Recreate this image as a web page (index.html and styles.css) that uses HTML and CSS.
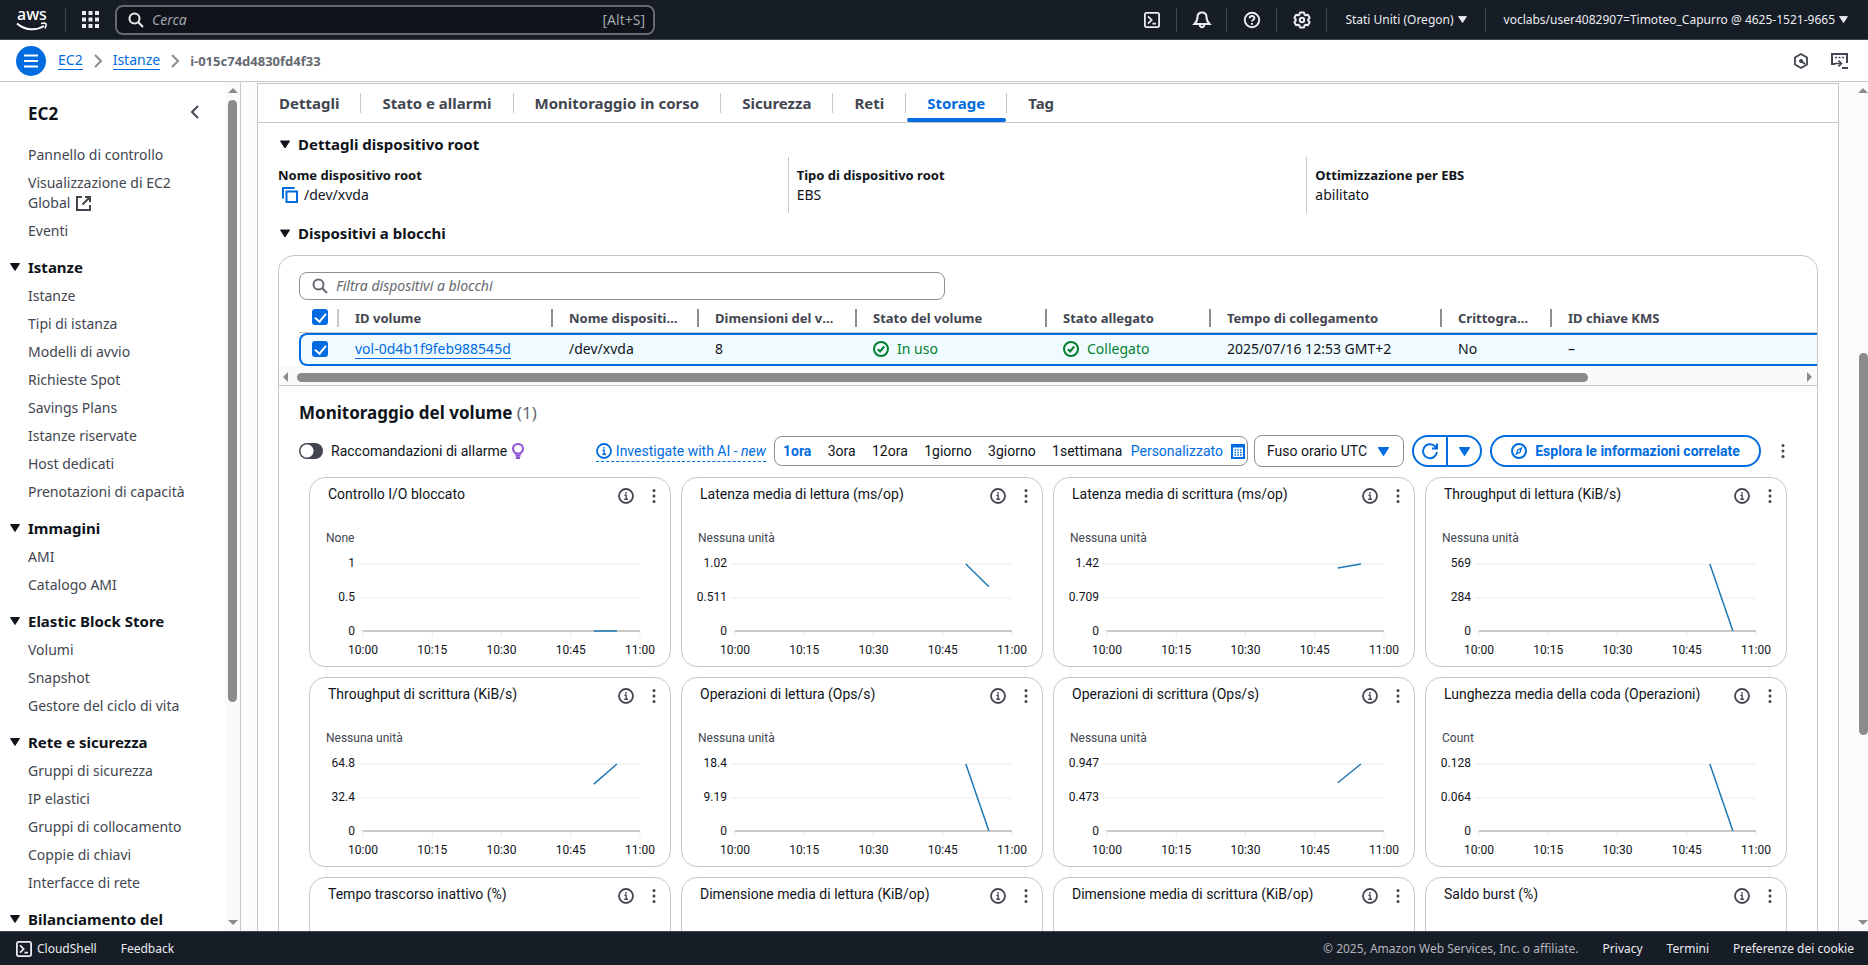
FILE: index.html
```
<!DOCTYPE html>
<html lang="it">
<head>
  <meta charset="UTF-8" />
  <meta name="viewport" content="width=device-width, initial-scale=1.0" />
  <title>Dettagli istanza | EC2</title>
  <link rel="stylesheet" href="styles.css">
</head>
<body>
  <!-- icone condivise -->
  <svg class="sprite" aria-hidden="true">
    <symbol id="i-search" viewBox="0 0 16 16"><circle cx="6.5" cy="6.5" r="5"/><path d="M10.3 10.3L15 15"/></symbol>
    <symbol id="i-shell" viewBox="0 0 18 18"><rect x="1" y="1" width="16" height="16" rx="2"/><path d="M4.5 4.8L8.6 9l-4.1 4.2M9.5 13h4"/></symbol>
    <symbol id="i-info" viewBox="0 0 16 16"><circle cx="8" cy="8" r="7" stroke-width="1.8"/><path stroke-width="1.4" d="M6.500 7.200H8.200V11.300M6.300 11.300h3.800M8 4v1.700"/></symbol>
    <symbol id="i-dots" viewBox="0 0 4 16"><g fill="currentColor" stroke="none"><circle cx="2" cy="2.5" r="1.5"/><circle cx="2" cy="8" r="1.5"/><circle cx="2" cy="13.5" r="1.5"/></g></symbol>
    <symbol id="i-down" viewBox="0 0 10 8"><path fill="currentColor" stroke-width="1" stroke-linejoin="round" d="M.5.5h9L5 7.5z"/></symbol>
    <symbol id="i-right" viewBox="0 0 8 14"><path d="M1 1l6 6-6 6"/></symbol>
    <symbol id="i-ok" viewBox="0 0 16 16"><circle cx="8" cy="8" r="7"/><path d="M4.8 8.2l2.3 2.3 4.1-5"/></symbol>
  </svg>

  <header class="topbar">
    <a class="aws" href="#" aria-label="AWS">
      <span>aws</span>
      <svg width="32" height="10" viewBox="0 0 32 10"><path d="M1 1.500C9 8.500 20 9 28 4" stroke-width="2"/><path d="M25 1.500c5-1 6.500-.5 4 5" stroke-width="1.600"/></svg>
    </a>
    <button class="apps" aria-label="Servizi">
      <svg width="17" height="17" viewBox="0 0 17 17"><path fill="currentColor" stroke="none" d="M0 0h4v4H0zM6.500 0h4v4h-4zM13 0h4v4h-4zM0 6.500h4v4H0zM6.500 6.500h4v4h-4zM13 6.500h4v4h-4zM0 13h4v4H0zM6.500 13h4v4h-4zM13 13h4v4h-4z"/></svg>
    </button>
    <label class="top-search">
      <svg width="16" height="16"><use href="#i-search"/></svg>
      <input type="search" placeholder="Cerca" aria-label="Cerca" />
      <kbd>[Alt+S]</kbd>
    </label>
    <nav class="top-nav">
      <button class="icon-cell" aria-label="CloudShell"><svg width="16" height="16"><use href="#i-shell"/></svg></button>
      <button class="icon-cell" aria-label="Notifiche"><svg width="18" height="18" viewBox="0 0 18 18"><path d="M9 1.500c-3 0-4.500 2-4.500 4.500 0 4-1.500 5.500-3 7h15c-1.500-1.500-3-3-3-7C13.500 3.500 12 1.500 9 1.500zM6.800 13.500c0 3.600 4.400 3.600 4.400 0"/></svg></button>
      <button class="icon-cell" aria-label="Aiuto"><svg width="18" height="18" viewBox="0 0 18 18"><circle cx="9" cy="9" r="7.200"/><path d="M6.700 7.200c0-3 4.700-3 4.700-.2 0 1.700-2.400 1.700-2.400 3.600M9 12v1.800"/></svg></button>
      <button class="icon-cell" aria-label="Impostazioni"><svg width="18" height="18" viewBox="0 0 18 18"><path stroke-linejoin="round" d="M7 1.500h4l.6 2.200 1 .6 2.300-.5 1.700 3-1.400 1.700v1l1.400 1.700-1.700 3-2.300-.5-1 .6-.6 2.200H7l-.6-2.200-1-.6-2.300.5-1.700-3 1.400-1.700v-1L1.400 6.800l1.700-3 2.300.5 1-.6z"/><circle cx="9" cy="9" r="2.200"/></svg></button>
      <button class="text-cell">Stati Uniti (Oregon) <svg width="9" height="7"><use href="#i-down"/></svg></button>
      <button class="text-cell">voclabs/user4082907=Timoteo_Capurro @ 4625-1521-9665 <svg width="9" height="7"><use href="#i-down"/></svg></button>
    </nav>
  </header>

  <div class="crumbbar">
    <button class="menu-btn" aria-label="Menu"><svg width="16" height="14" viewBox="0 0 16 14"><path d="M1 1.500h14M1 7h14M1 12.500h14"/></svg></button>
    <nav class="crumbs">
      <a href="#">EC2</a>
      <svg width="8" height="14"><use href="#i-right"/></svg>
      <a href="#">Istanze</a>
      <svg width="8" height="14"><use href="#i-right"/></svg>
      <b>i-015c74d4830fd4f33</b>
    </nav>
    <div class="crumb-tools">
      <button aria-label="Amazon Q"><svg width="16" height="16" viewBox="0 0 16 16"><path stroke-width="1.800" d="M8 1l6 3.500v7L8 15l-6-3.500v-7z"/><path stroke-width="1.800" d="M8 8l4 3"/><circle cx="8" cy="8" r="1.500" fill="currentColor" stroke-width="1"/></svg></button>
      <button aria-label="Pannello"><svg width="17" height="16" viewBox="0 0 17 16"><path d="M4 11H1V1h15v9M11 15h6"/><path stroke-width="1.600" d="M4 4.500h2M7.500 4.500h2M11 4.500h2M4 10.500h6M7.500 7.500l3 3-3 3"/></svg></button>
    </div>
  </div>

  <div class="layout">
    <aside class="sidebar">
      <div class="side-body">
        <div class="side-head"><h2>EC2</h2><button aria-label="Chiudi"><svg width="8" height="14" viewBox="0 0 8 14"><path d="M7 1L1 7l6 6"/></svg></button></div>
        <ul class="side-list">
          <li><a href="#">Pannello di controllo</a></li>
          <li><a href="#">Visualizzazione di EC2 Global <svg width="15" height="15" viewBox="0 0 15 15"><path d="M6 1H1v13h13V9M9 1h5v5M14 1L6.500 8.500"/></svg></a></li>
          <li><a href="#">Eventi</a></li>
          <li class="group"><svg width="10" height="8"><use href="#i-down"/></svg>Istanze</li>
          <li><a href="#">Istanze</a></li>
          <li><a href="#">Tipi di istanza</a></li>
          <li><a href="#">Modelli di avvio</a></li>
          <li><a href="#">Richieste Spot</a></li>
          <li><a href="#">Savings Plans</a></li>
          <li><a href="#">Istanze riservate</a></li>
          <li><a href="#">Host dedicati</a></li>
          <li><a href="#">Prenotazioni di capacità</a></li>
          <li class="group"><svg width="10" height="8"><use href="#i-down"/></svg>Immagini</li>
          <li><a href="#">AMI</a></li>
          <li><a href="#">Catalogo AMI</a></li>
          <li class="group"><svg width="10" height="8"><use href="#i-down"/></svg>Elastic Block Store</li>
          <li><a href="#">Volumi</a></li>
          <li><a href="#">Snapshot</a></li>
          <li><a href="#">Gestore del ciclo di vita</a></li>
          <li class="group"><svg width="10" height="8"><use href="#i-down"/></svg>Rete e sicurezza</li>
          <li><a href="#">Gruppi di sicurezza</a></li>
          <li><a href="#">IP elastici</a></li>
          <li><a href="#">Gruppi di collocamento</a></li>
          <li><a href="#">Coppie di chiavi</a></li>
          <li><a href="#">Interfacce di rete</a></li>
          <li class="group"><svg width="10" height="8"><use href="#i-down"/></svg>Bilanciamento del</li>
        </ul>
      </div>
      <div class="vscroll"><i class="up"></i><div class="track"><div class="thumb side-thumb"></div></div><i class="dn"></i></div>
    </aside>

    <main class="content">
      <div class="panel">
        <nav class="tabs">
          <a href="#">Dettagli</a>
          <a href="#">Stato e allarmi</a>
          <a href="#">Monitoraggio in corso</a>
          <a href="#">Sicurezza</a>
          <a href="#">Reti</a>
          <a href="#" class="active">Storage</a>
          <a href="#">Tag</a>
        </nav>

        <div class="panel-body">
          <h3 class="section-title"><svg width="10" height="9"><use href="#i-down"/></svg>Dettagli dispositivo root</h3>
          <dl class="facts">
            <div><dt>Nome dispositivo root</dt><dd><svg class="copy" width="16" height="16" viewBox="0 0 16 16"><path d="M1 11.500V1h11.500M4.500 4.500H15V15H4.500z"/></svg>/dev/xvda</dd></div>
            <div><dt>Tipo di dispositivo root</dt><dd>EBS</dd></div>
            <div><dt>Ottimizzazione per EBS</dt><dd>abilitato</dd></div>
          </dl>
          <h3 class="section-title"><svg width="10" height="9"><use href="#i-down"/></svg>Dispositivi a blocchi</h3>

          <section class="card">
            <label class="filter">
              <svg width="16" height="16"><use href="#i-search"/></svg>
              <input type="search" placeholder="Filtra dispositivi a blocchi" aria-label="Filtra dispositivi a blocchi" />
            </label>
            <table class="blocks">
              <colgroup><col class="c-check"><col class="c-id"><col class="c-name"><col class="c-size"><col class="c-state"><col class="c-att"><col class="c-time"><col class="c-enc"><col></colgroup>
              <thead>
                <tr>
                  <th><input type="checkbox" checked aria-label="Seleziona tutto"></th>
                  <th>ID volume</th>
                  <th>Nome dispositivo</th>
                  <th>Dimensioni del volume</th>
                  <th>Stato del volume</th>
                  <th>Stato allegato</th>
                  <th>Tempo di collegamento</th>
                  <th>Crittografato</th>
                  <th>ID chiave KMS</th>
                </tr>
              </thead>
              <tbody>
                <tr>
                  <td><input type="checkbox" checked aria-label="Seleziona vol-0d4b1f9feb988545d"></td>
                  <td><a href="#">vol-0d4b1f9feb988545d</a></td>
                  <td>/dev/xvda</td>
                  <td>8</td>
                  <td class="ok"><svg width="16" height="16"><use href="#i-ok"/></svg>In uso</td>
                  <td class="ok"><svg width="16" height="16"><use href="#i-ok"/></svg>Collegato</td>
                  <td>2025/07/16 12:53 GMT+2</td>
                  <td>No</td>
                  <td>–</td>
                </tr>
              </tbody>
            </table>
            <div class="hscroll"><i class="lf"></i><div class="track"><div class="thumb"></div></div><i class="rt"></i></div>

            <div class="monitor">
              <h2>Monitoraggio del volume <span>(1)</span></h2>
              <div class="tools">
                <label class="toggle"><input type="checkbox" role="switch">Raccomandazioni di allarme
                  <svg class="bulb" width="12" height="16" viewBox="0 0 12 16"><path d="M3.500 10.500C2.500 9 1 8 1 5.700 1 3 3.200 1 6 1s5 2 5 4.700c0 2.300-1.500 3.300-2.500 4.800zM3.500 12.700h5M4 15h4"/></svg>
                </label>
                <a class="investigate" href="#"><svg width="16" height="16"><use href="#i-info"/></svg><span>Investigate with AI - <em>new</em></span></a>
                <div class="range">
                  <button class="on">1ora</button><button>3ora</button><button>12ora</button><button>1giorno</button><button>3giorno</button><button>1settimana</button>
                  <button class="custom">Personalizzato <svg width="14" height="15" viewBox="0 0 14 15"><path d="M1 1h12v13H1zM1 2.500h12"/><path stroke-width="1.500" d="M3.500 6h1.500M6.300 6h1.500M9 6h1.500M3.500 8.500h1.500M6.300 8.500h1.500M9 8.500h1.500M3.500 11h1.500M6.300 11h1.500M9 11h1.500"/></svg></button>
                </div>
                <button class="tz">Fuso orario UTC <svg width="11" height="9"><use href="#i-down"/></svg></button>
                <div class="refresh">
                  <button aria-label="Aggiorna"><svg width="16" height="16" viewBox="0 0 16 16"><path d="M15 9a7 7 0 1 1-2.500-6.200L14.500 5M15 .5V5.500h-5"/></svg></button>
                  <button aria-label="Intervallo di aggiornamento"><svg width="11" height="9"><use href="#i-down"/></svg></button>
                </div>
                <button class="explore"><svg width="16" height="16" viewBox="0 0 16 16"><circle cx="8" cy="8" r="7"/><path stroke-width="1.300" d="M10.500 5L9.200 9 5.500 11l1.300-4z"/></svg>Esplora le informazioni correlate</button>
                <button class="dots" aria-label="Altro"><svg width="4" height="16"><use href="#i-dots"/></svg></button>
              </div>
              <div class="charts" id="charts"></div>
            </div>
          </section>
        </div>
      </div>
    </main>
    <div class="vscroll page-scroll"><i class="up"></i><div class="track"><div class="thumb page-thumb"></div></div><i class="dn"></i></div>
  </div>

  <footer class="footer">
    <a href="#"><svg width="16" height="16"><use href="#i-shell"/></svg>CloudShell</a>
    <a href="#">Feedback</a>
    <span class="copyright">© 2025, Amazon Web Services, Inc. o affiliate.</span>
    <a href="#">Privacy</a>
    <a href="#">Termini</a>
    <a href="#">Preferenze dei cookie</a>
  </footer>

  <script src="charts.js"></script>
</body>
</html>
```

FILE: charts.js
```
// [titolo, unità, etichette asse y, valori 10:50 e 10:55 (0-1)]
const CHARTS = [
  ['Controllo I/O bloccato', 'None', ['1', '0.5', '0'], [0, 0]],
  ['Latenza media di lettura (ms/op)', 'Nessuna unità', ['1.02', '0.511', '0'], [1, 0.66]],
  ['Latenza media di scrittura (ms/op)', 'Nessuna unità', ['1.42', '0.709', '0'], [0.94, 1]],
  ['Throughput di lettura (KiB/s)', 'Nessuna unità', ['569', '284', '0'], [1, 0]],
  ['Throughput di scrittura (KiB/s)', 'Nessuna unità', ['64.8', '32.4', '0'], [0.7, 1]],
  ['Operazioni di lettura (Ops/s)', 'Nessuna unità', ['18.4', '9.19', '0'], [1, 0]],
  ['Operazioni di scrittura (Ops/s)', 'Nessuna unità', ['0.947', '0.473', '0'], [0.72, 1]],
  ['Lunghezza media della coda (Operazioni)', 'Count', ['0.128', '0.064', '0'], [1, 0]],
  ['Tempo trascorso inattivo (%)'],
  ['Dimensione media di lettura (KiB/op)'],
  ['Dimensione media di scrittura (KiB/op)'],
  ['Saldo burst (%)']
];
const TIMES = ['10:00', '10:15', '10:30', '10:45', '11:00'];

function plotHtml(unit, labels, [a, b]) {
  const ticks = TIMES.map((t, i) => `<path class="tick" d="M${i * 15} 67v6"/>`).join('');
  return `
    <div class="unit">${unit}</div>
    <div class="plot">
      <div class="ylabels">${labels.map(l => `<span>${l}</span>`).join('')}</div>
      <svg viewBox="0 0 60 67" preserveAspectRatio="none">
        <path class="grid" d="M-1 0H60M-1 34H60M-1 67H0"/>${ticks}
        <path class="axis" d="M0 67H60"/>
        <path class="line" d="M50 ${67 - a * 67}L55 ${67 - b * 67}"/>
      </svg>
    </div>
    <div class="xlabels">${TIMES.map(t => `<span>${t}</span>`).join('')}</div>`;
}

const chartsDiv = document.getElementById('charts');
for (const [title, unit, labels, values] of CHARTS) {
  const card = document.createElement('article');
  card.className = 'chart';
  card.innerHTML = `
    <header><h4>${title}</h4>
      <button aria-label="Informazioni"><svg width="16" height="16"><use href="#i-info"/></svg></button>
      <button aria-label="Altro"><svg width="4" height="16"><use href="#i-dots"/></svg></button>
    </header>` + (values ? plotHtml(unit, labels, values) : '');
  chartsDiv.appendChild(card);
}
```

FILE: styles.css
```
:root {
  --dark: #161d26;
  --text: #0f141a;
  --muted: #424650;
  --grey: #656871;
  --line: #c6c6cd;
  --input: #8c8c94;
  --blue: #006ce0;
  --green: #00802f;
  --thumb: #8b8b8b;
}
* { box-sizing: border-box; }
html, body { height: 100%; }
body {
  margin: 0;
  display: flex;
  flex-direction: column;
  overflow: hidden;
  background: #fff;
  color: var(--text);
  font: 14px/20px "Noto Sans", "Open Sans", sans-serif;
}
button, input { font: inherit; color: inherit; }
button { background: none; border: 0; padding: 0; cursor: pointer; }
a { color: inherit; text-decoration: none; }
h2, h3, h4, ul, dl, dd { margin: 0; padding: 0; }
ul { list-style: none; }
svg { fill: none; stroke: currentColor; stroke-width: 2; flex: none; overflow: visible; }
.sprite { position: absolute; width: 0; height: 0; }

/* barra superiore */
.topbar {
  flex: none;
  height: 40px;
  display: flex;
  align-items: center;
  background: var(--dark);
  border-bottom: 1px solid var(--muted);
  color: #ebebf0;
}
.aws {
  width: 66px;
  height: 24px;
  padding-left: 16px;
  border-right: 1px solid var(--muted);
  color: #fff;
  display: flex;
  flex-direction: column;
}
.aws span { padding-left: 1px; font-size: 16px; line-height: 12px; font-weight: 500; }
.aws svg { margin-top: 2px; }
.apps { width: 49px; height: 39px; display: flex; align-items: center; justify-content: center; }
.top-search {
  width: 540px;
  height: 30px;
  display: flex;
  align-items: center;
  gap: 8px;
  padding: 0 8px 0 11px;
  border: 2px solid var(--grey);
  border-radius: 8px;
  background: #0f141a;
}
.top-search input, .filter input {
  flex: 1;
  min-width: 0;
  border: 0;
  padding: 0;
  background: none;
  outline: none;
}
.top-search input::placeholder { color: #a4a4ad; font-style: italic; opacity: 1; }
.top-search kbd { font: inherit; color: #a4a4ad; }
.top-nav { margin-left: auto; padding-right: 2px; display: flex; align-items: center; font-size: 12px; }
.top-nav button { height: 24px; display: flex; align-items: center; justify-content: center; border-right: 1px solid var(--muted); }
.icon-cell { width: 50px; }
.text-cell { gap: 4px; padding: 0 18px; }
.top-nav .text-cell:last-child { border: 0; }

.crumbbar {
  flex: none;
  height: 42px;
  display: flex;
  align-items: center;
  padding: 0 20px 0 16px;
  border-bottom: 1px solid var(--line);
}
.menu-btn {
  width: 30px;
  height: 30px;
  border-radius: 50%;
  background: var(--blue);
  color: #fff;
  display: flex;
  align-items: center;
  justify-content: center;
}
.crumbs { display: flex; align-items: center; gap: 11px; margin-left: 12px; color: var(--grey); }
.crumbs a, .blocks a { color: var(--blue); border-bottom: 1px solid; line-height: 18px; }
.crumbs svg { color: var(--input); }
.crumbs b { font-size: 13px; font-weight: 700; }
.crumb-tools { margin-left: auto; display: flex; gap: 22px; color: var(--muted); }
.crumb-tools button { display: flex; }

.layout { flex: 1; min-height: 0; display: flex; }
.sidebar { width: 241px; flex: none; display: flex; border-right: 1px solid var(--line); overflow: hidden; }
.side-body { flex: 1; padding: 20px 12px 0 10px; overflow: hidden; color: var(--muted); }
.side-head { display: flex; justify-content: space-between; align-items: center; height: 24px; padding: 0 14px 0 18px; margin-bottom: 19px; }
.side-head h2 { font-size: 17px; color: var(--text); }
.side-list { display: flex; flex-direction: column; gap: 8px; }
.side-list li { padding: 0 18px; }
.side-list li svg { vertical-align: -3px; margin-left: 2px; }
.side-list .group { padding: 7px 0 0; font-size: 15px; line-height: 22px; font-weight: 700; color: var(--text); display: flex; align-items: center; white-space: nowrap; }
.side-list .group svg { margin: 0 8px 0 0; }

/* barre di scorrimento */
.vscroll { width: 15px; display: flex; flex-direction: column; align-items: center; padding: 6px 0; background: #fafafa; }
.track { flex: 1; }
.vscroll .track { padding: 7px 0; }
.thumb { width: 9px; border-radius: 5px; background: var(--thumb); }
.side-thumb { height: 74%; }
.page-thumb { height: 47%; margin-top: 253px; }
.page-scroll { width: 13px; align-items: flex-end; flex: none; background: #fcfcfd; }
.vscroll i, .hscroll i { border: 5px solid transparent; }
.vscroll .up { border-top: 0; border-bottom-color: var(--thumb); }
.vscroll .dn { border-bottom: 0; border-top-color: var(--thumb); }

.content { flex: 1; min-width: 0; padding: 1px 16px 0; overflow: hidden; background: #fcfcfd; }
.panel { background: #fff; border: 1px solid var(--line); min-height: 100%; }
.tabs { display: flex; height: 39px; border-bottom: 1px solid var(--line); font-size: 15px; font-weight: 700; color: var(--muted); }
.tabs a { position: relative; height: 38px; padding: 0 21px 0 22px; line-height: 38px; }
.tabs a:first-child { padding-left: 21px; }
.tabs a + a::before { content: ""; position: absolute; left: 0; top: 9px; height: 20px; border-left: 1px solid var(--line); }
.tabs .active { color: var(--blue); }
.tabs .active::after { content: ""; position: absolute; left: 2px; right: 0; bottom: 0; height: 4px; border-radius: 4px; background: var(--blue); }

.panel-body { padding: 9px 20px 0; }
.section-title { display: flex; align-items: center; gap: 8px; height: 24px; margin-bottom: 1px; padding-left: 2px; font-size: 15px; font-weight: 700; }
.facts { display: grid; grid-template-columns: repeat(3, 1fr); gap: 16px; margin-bottom: 8px; }
.facts div { height: 56px; padding-top: 8px; }
.facts div + div { border-left: 1px solid var(--line); margin-left: -9px; padding-left: 8px; }
.facts dt { font-size: 13px; font-weight: 700; }
.facts dd { display: flex; align-items: center; }
.copy { margin: 0 6px 0 4px; color: var(--blue); }

.card { margin-top: 10px; border: 1px solid var(--line); border-radius: 16px 16px 0 0; overflow: hidden; }
.filter {
  display: flex;
  align-items: center;
  gap: 8px;
  width: 42%;
  height: 28px;
  margin: 16px 0 4px 20px;
  padding: 0 12px;
  border: 1px solid var(--input);
  border-radius: 8px;
  color: var(--grey);
}
.filter input::placeholder { color: var(--grey); font-style: italic; opacity: 1; }
.blocks { width: calc(100% - 20px); margin-left: 20px; table-layout: fixed; border-collapse: separate; border-spacing: 0; }
.c-check { width: 40px; }
.c-id { width: 214px; }
.c-name { width: 146px; }
.c-size { width: 158px; }
.c-state { width: 190px; }
.c-att { width: 164px; }
.c-time { width: 231px; }
.c-enc { width: 110px; }
.blocks th, .blocks td { padding: 0 16px; text-align: left; white-space: nowrap; overflow: hidden; text-overflow: ellipsis; }
.blocks th {
  height: 29px;
  padding-right: 20px;
  color: var(--muted);
  font-size: 13px;
  font-weight: 700;
  border-bottom: 1px solid var(--line);
  background: linear-gradient(var(--input), var(--input)) right 5px / 2px 18px no-repeat;
}
.blocks th:first-child { background-image: linear-gradient(var(--line), var(--line)); }
.blocks th:last-child { background: none; }
.blocks th:first-child, .blocks td:first-child { padding: 0 0 2px 13px; text-overflow: clip; }
.blocks td:first-child { padding-left: 11px; }
.blocks td { height: 33px; padding-bottom: 1px; background: #f0fbff; border: solid var(--blue); border-width: 2px 0; }
.blocks td:first-child { border-left-width: 2px; border-radius: 8px 0 0 8px; }
.blocks td svg { vertical-align: -3px; margin-right: 8px; }
.blocks .ok { color: var(--green); }
.blocks input {
  appearance: none;
  display: block;
  width: 16px;
  height: 16px;
  margin: 0;
  border-radius: 3px;
  background: var(--blue);
}
.blocks input::after {
  content: "";
  display: block;
  width: 5px;
  height: 9px;
  margin: 2px auto 0;
  border: solid #fff;
  border-width: 0 2px 2px 0;
  transform: rotate(40deg);
}
.hscroll { display: flex; align-items: center; height: 20px; padding: 3px 5px 0 4px; background: #fafafa; border-bottom: 1px solid var(--line); }
.hscroll .track { padding: 0 9px; }
.hscroll .thumb { width: 86%; height: 9px; }
.hscroll .lf { border-left: 0; border-right-color: var(--thumb); }
.hscroll .rt { border-right: 0; border-left-color: var(--thumb); }

.monitor { padding: 15px 20px 0; font-family: Roboto, sans-serif; }
.monitor h2 { font: 700 17px/24px "Noto Sans", sans-serif; }
.monitor h2 span { font-weight: 400; color: var(--grey); }
.tools { display: flex; align-items: center; height: 32px; margin-top: 10px; font-size: 14px; }
.toggle { display: flex; align-items: center; margin-right: auto; }
.toggle input {
  appearance: none;
  width: 24px;
  height: 16px;
  margin: 0 8px 0 0;
  border-radius: 8px;
  background: radial-gradient(circle at 8px 8px, #fff 6px, var(--muted) 7px);
}
.bulb { color: #8d4fd6; margin-left: 5px; }
.investigate { display: flex; align-items: center; gap: 4px; height: 22px; margin-right: 8px; color: var(--blue); border-bottom: 1px dashed; }
.range { display: flex; align-items: center; justify-content: space-between; width: 474px; height: 30px; margin-right: 6px; padding: 0 2px 0 8px; border: 1px solid var(--input); border-radius: 8px; }
.range .on { color: var(--blue); font-weight: 700; }
.custom { display: flex; align-items: center; gap: 8px; margin-left: -8px; color: var(--blue); }
.tz { display: flex; align-items: center; justify-content: space-between; width: 150px; height: 32px; padding: 0 14px 0 12px; border: 1px solid var(--input); border-radius: 8px; }
.tz svg, .refresh svg { color: var(--blue); }
.refresh { display: flex; width: 70px; height: 32px; margin: 0 8px; border: 2px solid var(--blue); border-radius: 16px; }
.refresh button { flex: 1; display: flex; align-items: center; justify-content: center; }
.refresh button + button { border-left: 2px solid var(--blue); }
.explore { display: flex; align-items: center; justify-content: center; gap: 8px; width: 271px; height: 32px; border: 2px solid var(--blue); border-radius: 16px; color: var(--blue); font-weight: 700; }
.dots { display: flex; width: 36px; padding-left: 20px; color: var(--muted); }

.charts { display: grid; grid-template-columns: repeat(4, 1fr); gap: 10px; margin: 10px 10px 0; }
.chart { height: 190px; border: 1px solid var(--line); border-radius: 16px; padding: 6px 14px 0 16px; font-size: 12px; }
.chart header { display: flex; align-items: center; color: var(--muted); }
.chart h4 { flex: 1; padding-left: 2px; font-size: 14px; font-weight: 400; color: var(--text); white-space: nowrap; }
.chart button { display: flex; padding-top: 4px; }
.chart button + button { margin-left: 18px; }
.unit { margin-top: 24px; line-height: 20px; color: var(--muted); }
.plot { display: flex; height: 67px; margin: 16px 16px 0 0; }
.plot svg { flex: 1; min-width: 0; height: 67px; }
.plot path { vector-effect: non-scaling-stroke; stroke-width: 1; }
.ylabels { width: 29px; margin: -9px 8px -8px 0; display: flex; flex-direction: column; justify-content: space-between; align-items: flex-end; line-height: 16px; }
.plot .grid, .plot .tick { stroke: #e9ebed; }
.plot .axis { stroke: #c8c8c8; stroke-width: 2; }
.plot .line { stroke: #1f77b4; stroke-width: 1.5; }
.xlabels { display: flex; justify-content: space-between; margin: 9px -4px 0 17px; }
.xlabels span { width: 40px; text-align: center; }

.footer { flex: none; height: 34px; display: flex; align-items: center; gap: 24px; padding: 1px 14px 0 16px; background: var(--dark); border-top: 1px solid var(--muted); color: #ebebf0; font-size: 12px; }
.footer a { display: flex; align-items: center; gap: 5px; }
.copyright { margin-left: auto; color: #b4b4bb; }
```
